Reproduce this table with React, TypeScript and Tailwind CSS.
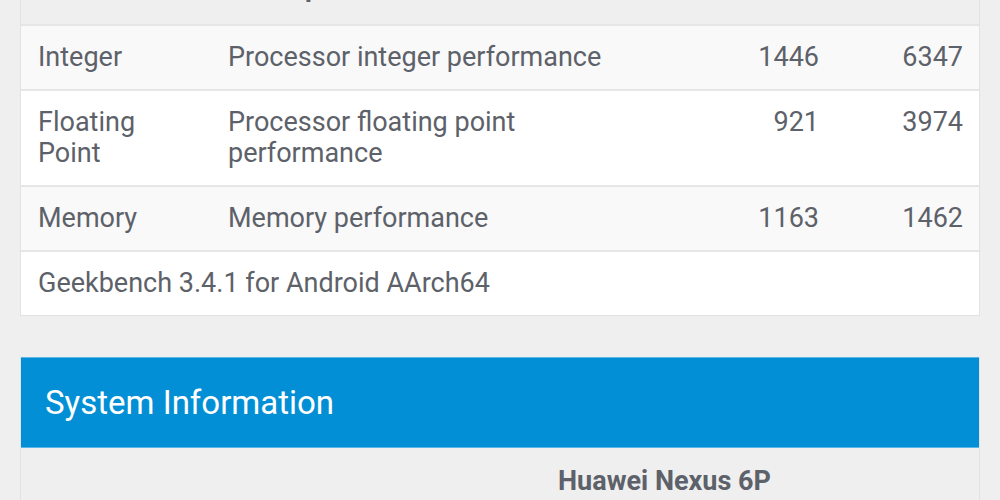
import React from "react";

type Row = {
  section: string[];
  description: string;
  single: string;
  multi: string;
  striped: boolean;
};

const rows: Row[] = [
  {
    section: ["Integer"],
    description: "Processor integer performance",
    single: "1446",
    multi: "6347",
    striped: true,
  },
  {
    section: ["Floating", "Point"],
    description: "Processor floating point performance",
    single: "921",
    multi: "3974",
    striped: false,
  },
  {
    section: ["Memory"],
    description: "Memory performance",
    single: "1163",
    multi: "1462",
    striped: true,
  },
];

const gridCols = "grid grid-cols-[190px_429px_195px_144px]";

export default function App() {
  return (
    <div
      className="w-[1000px] h-[500px] overflow-hidden bg-[#efefef] text-[#5d6169]"
      style={{ fontFamily: "Roboto, 'Noto Sans', sans-serif" }}
    >
      <div className="mx-[20px] -mt-[39px] border-x border-b border-[#e2e2e2]">
        {/* header row, scrolled off the top */}
        <div className={`${gridCols} h-[63px] bg-[#efefef] text-[27px] leading-[31px] font-bold whitespace-nowrap`}>
          <div className="px-[17px] pt-[11px]">Section</div>
          <div className="px-[17px] pt-[11px]">Description</div>
          <div />
          <div />
        </div>

        {rows.map((r) => (
          <div
            key={r.description}
            className={`${gridCols} border-t-2 border-[#e6e6e6] text-[27px] leading-[31px] ${
              r.striped ? "bg-[#f9f9f9]" : "bg-white"
            }`}
          >
            <div className="px-[17px] py-4">
              {r.section.map((s) => (
                <div key={s}>{s}</div>
              ))}
            </div>
            <div className="px-[17px] py-4">{r.description}</div>
            <div className="px-4 py-4 text-right">{r.single}</div>
            <div className="px-4 py-4 text-right">{r.multi}</div>
          </div>
        ))}

        <div className="border-t-2 border-[#e6e6e6] bg-white px-[17px] py-4 text-[27px] leading-[31px]">
          Geekbench 3.4.1 for Android AArch64
        </div>
      </div>

      <div className="mx-[20px] mt-[41px] border-x border-[#e2e2e2]">
        <div className="h-[91px] bg-[#038fd5] border-y border-[#5ab6e6] flex items-center px-[24px]">
          <span className="text-white text-[33px] leading-none">System Information</span>
        </div>
        <div className="grid grid-cols-[520px_1fr] bg-[#efefef]">
          <div />
          <div className="px-[17px] pt-[18px] pb-4 text-[27px] leading-[31px] font-bold whitespace-nowrap">
            Huawei Nexus 6P
          </div>
        </div>
      </div>
    </div>
  );
}
